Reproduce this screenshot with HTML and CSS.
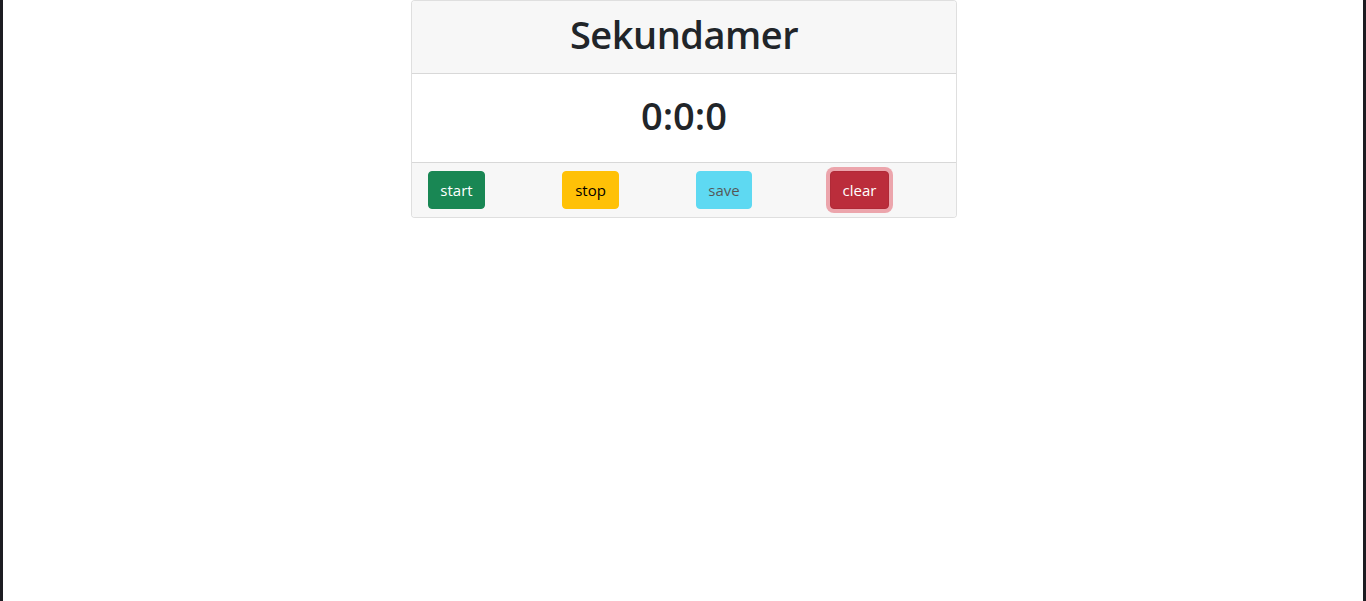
FILE: index.html
```html
<!DOCTYPE html>
<html lang="pl">
<head>
<meta charset="utf-8">
<title>Sekundamer</title>
<link rel="stylesheet" href="styles.css">
</head>
<body>
<div class="page">
  <div class="card">
    <div class="card-header">
      <h1 class="title">Sekundamer</h1>
    </div>
    <div class="card-body">
      <h1 class="time">0:0:0</h1>
    </div>
    <div class="card-footer">
      <div class="col"><button class="btn btn-success">start</button></div>
      <div class="col"><button class="btn btn-warning">stop</button></div>
      <div class="col"><button class="btn btn-info" disabled>save</button></div>
      <div class="col"><button class="btn btn-danger is-focused">clear</button></div>
    </div>
  </div>
</div>
</body>
</html>
```

FILE: styles.css
```css
* { box-sizing: border-box; }
html, body { margin: 0; padding: 0; height: 100%; }
body {
  background: #fff;
  border-left: 3px solid #1c1c22;
  border-right: 3px solid #1c1c22;
  font-family: "Open Sans", "Noto Sans", sans-serif;
  color: #212529;
}
.page {
  display: flex;
  justify-content: center;
  padding-left: 2px;
}
.card {
  width: 546px;
  border: 1px solid rgba(0,0,0,.125);
  border-radius: 4px;
  overflow: hidden;
  background: #fff;
}
.card-header {
  background: #f7f7f7;
  padding: 8px 16px;
  border-bottom: 1px solid rgba(0,0,0,.125);
  text-align: center;
}
.card-body {
  padding: 16px;
  text-align: center;
}
h1 {
  margin: 0 0 8px;
  font-size: 38px;
  line-height: 48px;
  font-weight: 600;
  color: #212529;
}
.title { letter-spacing: -0.5px; padding-top: 1px; height: 48px; }
.time { letter-spacing: 0; padding-top: 1px; height: 48px; }
.card-footer {
  background: #f7f7f7;
  border-top: 1px solid rgba(0,0,0,.125);
  padding: 8px 4px;
  display: flex;
}
.col {
  width: 134px;
  padding: 0 12px;
}
.btn {
  font-family: inherit;
  font-size: 15px;
  line-height: 24px;
  padding: 6px 0;
  border: 1px solid transparent;
  border-radius: 4px;
  height: 38px;
  cursor: pointer;
  text-align: center;
}
.btn-success { background: #198754; border-color: #198754; color: #fff; width: 57px; }
.btn-warning { background: #ffc107; border-color: #ffc107; color: #000; width: 57px; }
.btn-info { background: #0dcaf0; border-color: #0dcaf0; color: #000; opacity: .65; width: 56px; }
.btn-danger { background: #bb2d3b; border-color: #b02a37; color: #fff; width: 59px; }
.is-focused { box-shadow: 0 0 0 4px rgba(225,83,97,.5); }
```
